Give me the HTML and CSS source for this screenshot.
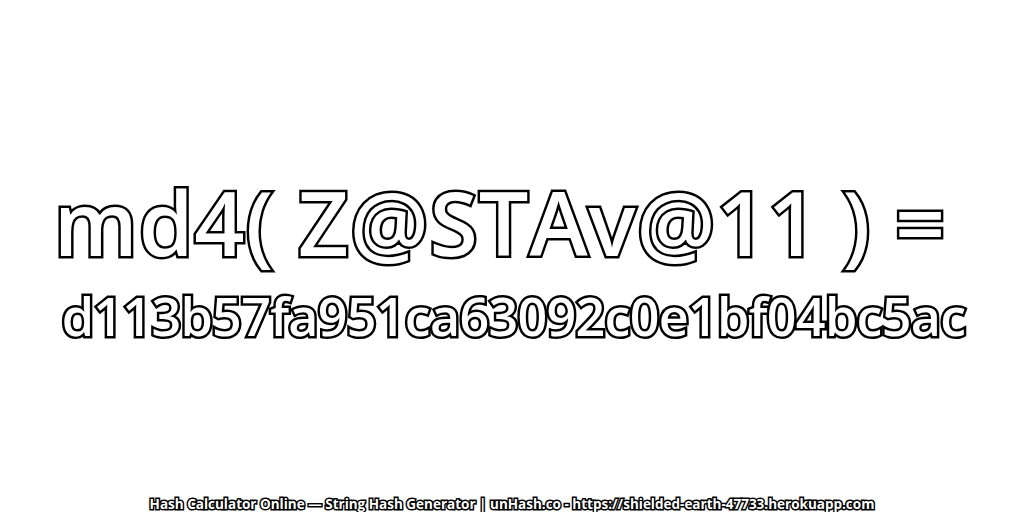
FILE: index.html
```html
<!DOCTYPE html>
<html>
<head>
<meta charset="utf-8">
<link rel="stylesheet" href="styles.css">
</head>
<body>
<div class="page">
  <div class="main">
    <div class="line1">md4( Z@STAv@11 ) =</div>
    <div class="line2">d113b57fa951ca63092c0e1bf04bc5ac</div>
  </div>
  <div class="footer">Hash Calculator Online — String Hash Generator | unHash.co - https://shielded-earth-47733.herokuapp.com</div>
</div>
</body>
</html>
```
FILE: styles.css
```css
html, body {
  margin: 0;
  padding: 0;
  background: #fff;
}
.page {
  width: 1024px;
  height: 512px;
  display: flex;
  flex-direction: column;
  align-items: center;
  font-family: "Open Sans", "DejaVu Sans", sans-serif;
  color: #fff;
  paint-order: stroke fill;
}
.main {
  flex: 1;
  display: flex;
  flex-direction: column;
  align-items: center;
  padding-top: 172px;
}
.line1 {
  font-size: 88px;
  font-weight: 600;
  line-height: 100px;
  letter-spacing: 0.9px;
  -webkit-text-stroke: 5px #000;
  white-space: pre;
  margin-right: 24px;
}
.line2 {
  font-size: 52px;
  font-weight: 600;
  line-height: 60px;
  letter-spacing: -0.7px;
  -webkit-text-stroke: 5px #000;
  margin-top: 14px;
  margin-left: 3px;
}
.footer {
  font-size: 13.5px;
  font-weight: 700;
  line-height: 16px;
  -webkit-text-stroke: 3px #000;
  white-space: pre;
}
```
